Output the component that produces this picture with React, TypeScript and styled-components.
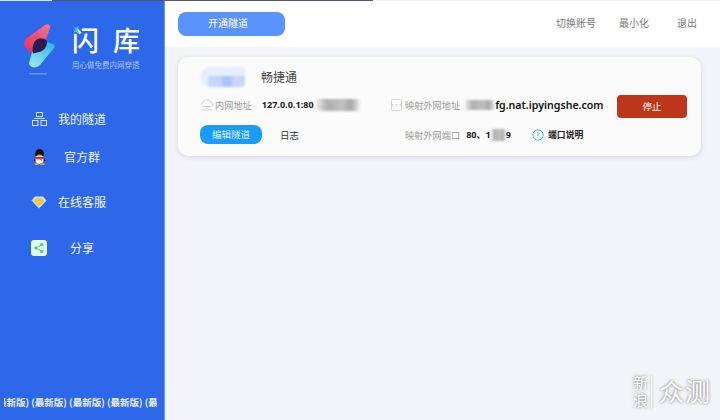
import React from "react";
import styled, { createGlobalStyle } from "styled-components";

const Global = createGlobalStyle`
  html, body { margin: 0; padding: 0; height: 100%; background: #f3f4f9; }
  #root { height: 100%; }
  * { box-sizing: border-box; }
  svg { display: block; }
  body { font-family: "Noto Sans CJK SC", "Noto Sans", sans-serif; overflow: hidden; }
`;

const Page = styled.div`
  position: relative;
  width: 720px;
  height: 420px;
  display: flex;
  overflow: hidden;
`;

const TopLine = styled.div`
  position: absolute;
  left: 0;
  top: 0;
  width: 720px;
  height: 1px;
  background: linear-gradient(90deg, #dfe6f8 0 52px, #55556a 52px 373px, #f1f2f4 373px);
`;

const Sidebar = styled.aside`
  width: 165px;
  height: 420px;
  flex: none;
  background: #2d68ea;
  border-right: 1px solid #6d96f0;
  display: flex;
  flex-direction: column;
`;

const Brand = styled.div`
  height: 98px;
  padding: 22px 0 0 23px;
  display: flex;
  gap: 15px;
`;

const BrandText = styled.div`
  display: flex;
  flex-direction: column;
  padding-top: 1px;
`;

const BrandName = styled.div`
  position: relative;
  color: #fff;
  font-size: 27px;
  line-height: 34px;
  font-weight: 500;
  letter-spacing: 14px;
  white-space: nowrap;
`;

const Spark = styled.svg`
  position: absolute;
  left: 1px;
  top: 2px;
`;

const BrandSlogan = styled.div`
  color: #a9c3f8;
  font-size: 7.5px;
  line-height: 11px;
  margin-top: 2px;
  white-space: nowrap;
`;

const Nav = styled.nav`
  display: flex;
  flex-direction: column;
  padding-left: 31px;
`;

const NavItem = styled.div<{ $h: number }>`
  height: ${(p) => p.$h}px;
  display: flex;
  align-items: center;
`;

const NavIcon = styled.div`
  width: 16px;
  height: 16px;
  flex: none;
  display: flex;
  align-items: center;
  justify-content: center;
`;

const NavLabel = styled.span`
  flex: none;
  width: 72px;
  margin-left: -1px;
  text-align: center;
  color: #f2f6ff;
  font-size: 12px;
  line-height: 16px;
  white-space: nowrap;
`;

const Ticker = styled.div`
  margin: auto 0 0 4px;
  width: 153px;
  height: 25px;
  padding-top: 1px;
  overflow: hidden;
  white-space: nowrap;
  color: #eaf0ff;
  font-size: 9.5px;
  font-weight: 700;
  line-height: 12px;
`;

const TickerRun = styled.div`
  margin-left: -7px;
`;

const Main = styled.main`
  flex: 1;
  display: flex;
  flex-direction: column;
  min-width: 0;
`;

const Header = styled.header`
  height: 47px;
  background: #fff;
  display: flex;
  align-items: center;
  padding: 0 23px 0 13px;
`;

const OpenButton = styled.button`
  width: 107px;
  height: 24px;
  border: none;
  border-radius: 8px;
  background: #5b93fd;
  color: #fff;
  font-family: inherit;
  font-size: 10px;
  line-height: 14px;
  padding: 0 7px 1px 0;
`;

const HeaderLinks = styled.div`
  margin-left: auto;
  display: flex;
  padding-bottom: 2px;
`;

const HeaderLink = styled.span<{ $ml: number }>`
  margin-left: ${(p) => p.$ml}px;
  color: #777;
  font-size: 10px;
  line-height: 14px;
`;

const Content = styled.div`
  padding: 10px 19px 0 13px;
`;

const Card = styled.section`
  height: 99px;
  background: #fbfbfb;
  border-radius: 10px;
  box-shadow: 0 1px 5px rgba(40, 50, 90, 0.16);
  padding: 10px 14px 0 22px;
  display: flex;
  flex-direction: column;
`;

const CardHead = styled.div`
  display: flex;
  align-items: center;
  height: 20px;
  gap: 16px;
`;

const TunnelName = styled.span`
  color: #444;
  font-size: 12px;
  line-height: 16px;
`;

const AvatarBlur = styled.div`
  width: 45px;
  height: 20px;
  border-radius: 10px 4px 4px 10px;
  background:
    linear-gradient(180deg, #e6eefe 0 45%, transparent 45%),
    linear-gradient(90deg, #e8effe 0 18%, #c6d6fa 18% 48%, #adc5f7 48% 72%, #c6d6fa 72%);
  filter: blur(1px);
`;

const CardBody = styled.div`
  display: flex;
  margin-top: 8px;
`;

const Column = styled.div<{ $w: number }>`
  width: ${(p) => p.$w}px;
  flex: none;
  display: flex;
  flex-direction: column;
  gap: 10px;
`;

const InfoRow = styled.div<{ $h: number }>`
  height: ${(p) => p.$h}px;
  display: flex;
  align-items: center;
`;

const RowIcon = styled.div`
  width: 14px;
  height: 14px;
  flex: none;
  margin-right: 1px;
`;

const FieldLabel = styled.span`
  color: #9a9a9a;
  font-size: 9.2px;
  line-height: 14px;
  white-space: nowrap;
`;

const Value = styled.span<{ $ml?: number }>`
  margin-left: ${(p) => p.$ml ?? 0}px;
  color: #222;
  font-weight: 700;
  font-size: 9.1px;
  line-height: 14px;
  white-space: nowrap;
  font-family: "Noto Sans", "Noto Sans CJK SC", sans-serif;
`;

const DomainValue = styled(Value)`
  font-size: 10.6px;
  color: #111;
  font-weight: 600;
`;

const Mosaic = styled.div<{ $w: number; $h: number; $ml?: number }>`
  width: ${(p) => p.$w}px;
  height: ${(p) => p.$h}px;
  margin-left: ${(p) => p.$ml ?? 0}px;
  flex: none;
  background: linear-gradient(90deg, #eee 0, #b0b0b0 25%, #c0c0c0 60%, #a8a8a8 80%, #f0f0f0 100%);
  filter: blur(1px);
`;

const EditButton = styled.button`
  width: 62px;
  height: 19px;
  border: none;
  border-radius: 8px;
  background: #1a9bf6;
  color: #dff1ff;
  font-family: inherit;
  font-size: 9.5px;
  line-height: 14px;
  padding: 0 0 1px;
`;

const LogLink = styled.span`
  margin-left: 18px;
  color: #333;
  font-size: 9.5px;
`;

const StopButton = styled.button`
  width: 70px;
  height: 23px;
  border: none;
  border-radius: 4px;
  background: #bf371b;
  color: #fff;
  font-family: inherit;
  font-size: 9.5px;
  line-height: 14px;
  padding: 0 0 2px;
`;

const PortHelp = styled.span`
  display: flex;
  align-items: center;
  gap: 4px;
  margin-left: 21px;
  color: #222;
  font-size: 8.8px;
  font-weight: 700;
`;

const Watermark = styled.div`
  position: absolute;
  right: 9px;
  bottom: 9px;
  display: flex;
  align-items: flex-start;
  color: #fff;
  text-shadow: 0 0 3px rgba(80, 80, 80, 0.85);
`;

const WatermarkSmall = styled.div`
  writing-mode: vertical-rl;
  width: 16px;
  font-size: 15px;
  line-height: 16px;
  letter-spacing: 3px;
`;

const WatermarkRule = styled.div`
  width: 1px;
  height: 33px;
  margin: 1px 7px 0 3px;
  background: #fff;
  box-shadow: 0 0 2px rgba(90, 90, 90, 0.6);
`;

const WatermarkBig = styled.div`
  font-size: 25px;
  line-height: 30px;
  letter-spacing: 1px;
  font-weight: 400;
`;

const Logo = () => (
  <svg width="34" height="58" viewBox="0 0 34 58">
    <defs>
      <linearGradient id="lr" x1="0.8" y1="0" x2="0.2" y2="1">
        <stop offset="0" stopColor="#f0728c" />
        <stop offset="1" stopColor="#ea2f5e" />
      </linearGradient>
      <linearGradient id="lb" x1="0.8" y1="0" x2="0.2" y2="1">
        <stop offset="0" stopColor="#28bde0" />
        <stop offset="1" stopColor="#9fe4f0" />
      </linearGradient>
    </defs>
    <path d="M22 3 C25 1 28 3 27 6 L22 20 C21 25 18 28 14 30 C9 32 3 28 1.5 23 C0.5 20 1.5 18 4 16 Z" fill="url(#lr)" />
    <path d="M23 20 L30 22 C32 23 32 25 31 26 L17 43 C13 47 7 46 6 41 L9 30 Z" fill="url(#lb)" />
    <path d="M13 18 C18 15 24 17 24 20 C24 25 21 28 18 29.5 L10 31.5 C9 26 10 21 13 18 Z" fill="#2a1b55" />
    <rect x="6" y="51" width="18" height="1.6" rx="0.8" fill="#6b95f0" />
  </svg>
);

const TopologyIcon = () => (
  <svg width="15" height="14" viewBox="0 0 15 14" fill="none" stroke="#d2e0fc" strokeWidth="1">
    <rect x="4.5" y="0.5" width="6" height="4" />
    <rect x="0.5" y="8.5" width="5.5" height="5" />
    <rect x="9" y="8.5" width="5.5" height="5" />
    <path d="M2 6.5 H13" />
  </svg>
);

const PenguinIcon = () => (
  <svg width="13" height="16" viewBox="0 0 13 16">
    <ellipse cx="6.5" cy="5" rx="4.3" ry="5" fill="#111" />
    <ellipse cx="6.5" cy="10.5" rx="4.4" ry="4.5" fill="#f4f4f4" />
    <path d="M2 8 H11 L10.5 10 H8.5 V12 L7 10.2 H2.5 Z" fill="#e4262b" />
    <path d="M2.3 9 L0.5 12 L2.5 12.5 Z M10.7 9 L12.5 12 L10.5 12.5 Z" fill="#111" />
    <ellipse cx="6.5" cy="6.5" rx="2" ry="1" fill="#f0b020" />
    <ellipse cx="3.8" cy="15" rx="2.5" ry="1" fill="#eda020" />
    <ellipse cx="9.2" cy="15" rx="2.5" ry="1" fill="#eda020" />
  </svg>
);

const DiamondIcon = () => (
  <svg width="16" height="13" viewBox="0 0 16 13">
    <path d="M4 0.5 H12 L15.5 4.5 L8 12.5 L0.5 4.5 Z" fill="#cfe0fb" />
    <path d="M5 2.5 H11 L13 4.8 L8 10.5 L3 4.8 Z" fill="#fcc419" />
    <path d="M5.5 5 H10.5 L8 6.5 Z" fill="#fff3c0" />
  </svg>
);

const ShareIcon = () => (
  <svg width="16" height="16" viewBox="0 0 16 16">
    <rect width="16" height="16" rx="3" fill="#e2fae8" />
    <g fill="#4fd08c">
      <circle cx="10.8" cy="4.6" r="1.7" />
      <circle cx="5" cy="8" r="1.7" />
      <circle cx="10.8" cy="11.4" r="1.7" />
    </g>
    <path d="M10.8 4.6 L5 8 L10.8 11.4" stroke="#4fd08c" fill="none" />
  </svg>
);

const CloudIcon = () => (
  <svg width="14" height="14" viewBox="0 0 14 14" fill="none" stroke="#cfcfcf" strokeWidth="1">
    <path d="M3.5 8.5 C1 8.5 0.5 5 3 4.5 C3.5 1.5 9.5 0.5 10.5 4 C13.5 4.2 13.5 8.5 10.5 8.5 Z" />
    <path d="M7 8.5 V11 M1.5 12 H12.5" />
  </svg>
);

const GatewayIcon = () => (
  <svg width="14" height="14" viewBox="0 0 14 14" fill="none" stroke="#d2d2d2" strokeWidth="1">
    <rect x="1.5" y="1.5" width="10" height="11" rx="1" />
    <path d="M1.5 7 H3.5 M5.5 7 H7.5 M9.5 7 H11.5" stroke="#bcbcbc" />
  </svg>
);

const InfoIcon = () => (
  <svg width="12" height="12" viewBox="0 0 12 12" fill="none" stroke="#35b8ea" strokeWidth="1">
    <circle cx="6" cy="6" r="5.2" />
    <path d="M6 2.8 V7 M6 8.2 V9.2" />
  </svg>
);

const tickerText = "最新版) (最新版) (最新版) (最新版) (最新版) (最";

export default function App() {
  return (
    <Page>
      <Global />
      <Sidebar>
        <Brand>
          <Logo />
          <BrandText>
            <BrandName>
              闪库
              <Spark width="6" height="9" viewBox="0 0 6 9">
                <path d="M0 0 L3 3 L6 1 L4.5 5 L6 9 L3 6.5 L0.5 8 L2 4 Z" fill="#35c4ee" />
              </Spark>
            </BrandName>
            <BrandSlogan>用心做免费内网穿透</BrandSlogan>
          </BrandText>
        </Brand>
        <Nav>
          <NavItem $h={42}>
            <NavIcon><TopologyIcon /></NavIcon>
            <NavLabel>我的隧道</NavLabel>
          </NavItem>
          <NavItem $h={34}>
            <NavIcon><PenguinIcon /></NavIcon>
            <NavLabel>官方群</NavLabel>
          </NavItem>
          <NavItem $h={56}>
            <NavIcon><DiamondIcon /></NavIcon>
            <NavLabel>在线客服</NavLabel>
          </NavItem>
          <NavItem $h={36}>
            <NavIcon><ShareIcon /></NavIcon>
            <NavLabel>分享</NavLabel>
          </NavItem>
        </Nav>
        <Ticker>
          <TickerRun>{tickerText}</TickerRun>
        </Ticker>
      </Sidebar>
      <Main>
        <Header>
          <OpenButton>开通隧道</OpenButton>
          <HeaderLinks>
            <HeaderLink $ml={0}>切换账号</HeaderLink>
            <HeaderLink $ml={23}>最小化</HeaderLink>
            <HeaderLink $ml={28}>退出</HeaderLink>
          </HeaderLinks>
        </Header>
        <Content>
          <Card>
            <CardHead>
              <AvatarBlur />
              <TunnelName>畅捷通</TunnelName>
            </CardHead>
            <CardBody>
              <Column $w={190}>
                <InfoRow $h={20}>
                  <RowIcon><CloudIcon /></RowIcon>
                  <FieldLabel>内网地址</FieldLabel>
                  <Value $ml={10}>127.0.0.1:80</Value>
                  <Mosaic $w={44} $h={12} $ml={2} />
                </InfoRow>
                <InfoRow $h={19}>
                  <EditButton>编辑隧道</EditButton>
                  <LogLink>日志</LogLink>
                </InfoRow>
              </Column>
              <Column $w={227}>
                <InfoRow $h={20}>
                  <RowIcon><GatewayIcon /></RowIcon>
                  <FieldLabel>映射外网地址</FieldLabel>
                  <Mosaic $w={30} $h={10} $ml={5} />
                  <DomainValue>fg.nat.ipyingshe.com</DomainValue>
                </InfoRow>
                <InfoRow $h={19}>
                  <RowIcon />
                  <FieldLabel>映射外网端口</FieldLabel>
                  <Value $ml={6}>80、1</Value>
                  <Mosaic $w={15} $h={12} />
                  <Value>9</Value>
                  <PortHelp><InfoIcon />端口说明</PortHelp>
                </InfoRow>
              </Column>
              <StopButton>停止</StopButton>
            </CardBody>
          </Card>
        </Content>
      </Main>
      <TopLine />
      <Watermark>
        <WatermarkSmall>新浪</WatermarkSmall>
        <WatermarkRule />
        <WatermarkBig>众测</WatermarkBig>
      </Watermark>
    </Page>
  );
}
